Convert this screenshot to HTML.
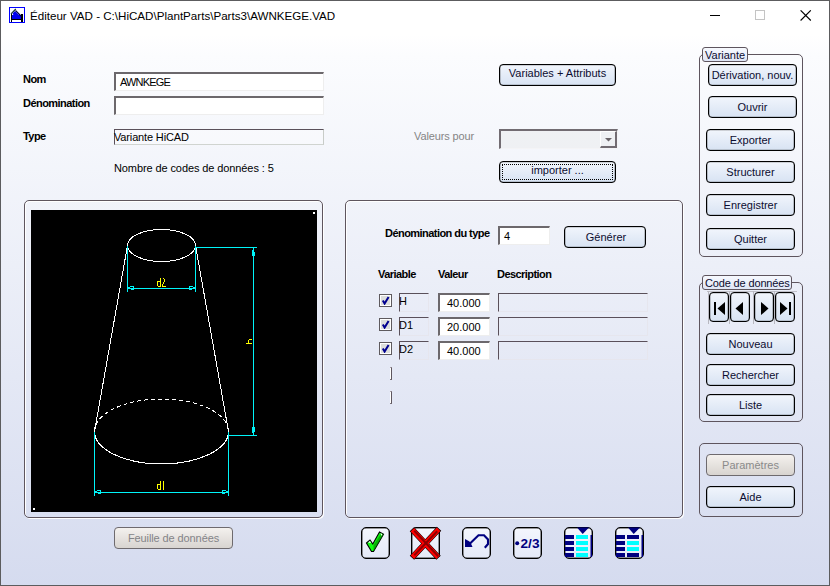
<!DOCTYPE html>
<html><head><meta charset="utf-8">
<style>
*{margin:0;padding:0;box-sizing:border-box}
html,body{width:830px;height:586px;overflow:hidden;background:#fff}
body{position:relative;font-family:"Liberation Sans",sans-serif;font-size:11px;color:#000}
.a{position:absolute}
.t{position:absolute;white-space:nowrap;line-height:13px}
#win{position:absolute;left:0;top:0;width:830px;height:586px;
background:linear-gradient(to bottom,#fff 0px,#fff 34px,#fbfcfe 56px,#d5dbef 586px)}
#bd{position:absolute;left:0;top:0;width:830px;height:586px;border:1px solid #5c5c5e}
.edit{position:absolute;background:#fff;border-top:2px solid #6c686c;border-left:2px solid #6c686c;border-right:1px solid #eeeeee;border-bottom:1px solid #eeeeee}
.edit2{position:absolute;border-top:2px solid #6c686c;border-left:2px solid #6c686c;border-right:1px solid #e6e6ee;border-bottom:1px solid #e6e6ee}
.btn{position:absolute;border:1px solid #000;box-shadow:inset 0 0 0 0.35px rgba(0,0,0,0.6);border-radius:4px;background:linear-gradient(to bottom,#f1f5fc,#d8e3f3);text-align:center;line-height:21px;color:#0c0c30}
.btnd{position:absolute;border:1px solid #6e6a6e;border-radius:4px;background:linear-gradient(to bottom,#f4f1ee,#d8d4d0);text-align:center;line-height:21px;color:#8a8a8a}
.grp{position:absolute;border:1px solid #5e555e;border-radius:5px}
.lbl{position:absolute;white-space:nowrap;border:1px solid #5e555e;border-radius:3px;background:linear-gradient(#f7f9fe,#dfe6f6);line-height:14px;padding-left:2px;color:#0c0c30}
.b{font-weight:bold;letter-spacing:-0.55px}
.tb{position:absolute;width:29px;height:32px;border:1px solid #000;box-shadow:inset 0 0 0 0.5px #333;border-radius:5px;background:linear-gradient(#f4f6fd,#e4e9f8)}
</style></head><body>
<div id="win">
<svg class="a" style="left:0;top:0" width="30" height="30" viewBox="0 0 30 30">
 <rect x="9.5" y="7.5" width="15" height="15" fill="#fff" stroke="#0000ff" stroke-width="1" shape-rendering="crispEdges"/>
 <g shape-rendering="crispEdges">
 <rect x="11" y="14" width="1" height="8" fill="#000"/><rect x="21" y="14" width="2" height="8" fill="#000"/>
 <rect x="11" y="19" width="12" height="1" fill="#000"/>
 <rect x="12" y="15" width="9" height="4" fill="#0000f0"/>
 </g>
 <path d="M12.5 13.5 L15 11 L21 17 L21 19 L16 19 Z" fill="#0000f0"/>
 <path d="M15.5 10.5 L21.5 16.5" stroke="#000050" stroke-width="1.1"/>
 <path d="M11 13.8 L15.8 9" stroke="#103038" stroke-width="1.2"/>
</svg>
<div class="t" style="left:30px;top:8px;font-size:11.6px;line-height:15px">Éditeur VAD - C:\HiCAD\PlantParts\Parts3\AWNKEGE.VAD</div>
<div class="a" style="left:710px;top:15px;width:10px;height:1px;background:#000"></div>
<div class="a" style="left:755px;top:10px;width:10px;height:10px;border:1px solid #c4c4c4"></div>
<svg class="a" style="left:800px;top:10px" width="12" height="11" viewBox="0 0 12 11"><path d="M0.6 0.3 L10.8 10.5 M10.8 0.3 L0.6 10.5" stroke="#000" stroke-width="1.1"/></svg>
<div class="t b" style="left:23px;top:73px;">Nom</div>
<div class="t b" style="left:23px;top:97px;">Dénomination</div>
<div class="t b" style="left:23px;top:130px;">Type</div>
<div class="edit" style="left:114px;top:72px;width:210px;height:19px"></div>
<div class="t " style="left:120px;top:76px;letter-spacing:-0.85px">AWNKEGE</div>
<div class="edit" style="left:114px;top:96px;width:210px;height:19px"></div>
<div class="a" style="left:114px;top:129px;width:210px;height:16px;border:1px solid #5a505a;border-right-color:#c8ccc8;border-bottom-color:#d0d4d0;background:rgba(255,255,255,0.3)"></div>
<div class="t " style="left:114px;top:131px;letter-spacing:-0.15px">Variante HiCAD</div>
<div class="t " style="left:114px;top:162px;letter-spacing:-0.1px">Nombre de codes de données : 5</div>
<div class="btn" style="left:499px;top:64px;width:117px;height:22px;line-height:17px">Variables + Attributs</div>
<div class="t " style="left:414px;top:130px;color:#858585;letter-spacing:-0.12px">Valeurs pour</div>
<div class="a" style="left:499px;top:129px;width:119px;height:20px;border-top:2px solid #726c72;border-left:2px solid #726c72;border-right:1px solid #f4f4f6;border-bottom:1px solid #f4f4f6;background:rgba(230,230,230,0.35)"></div>
<div class="a" style="left:600px;top:131px;width:17px;height:17px;border-left:1px solid #fff;border-top:1px solid #fff;border-right:2px solid #726c72;border-bottom:2px solid #726c72"></div>
<svg class="a" style="left:605px;top:138px" width="8" height="5"><path d="M0 0 L7 0 L3.5 3.5Z" fill="#6a6468"/></svg>
<div class="btn" style="left:499px;top:161px;width:117px;height:22px;line-height:17px"><div class="a" style="left:2px;top:2px;right:2px;bottom:2px;border:1px dotted #000"></div>importer ...</div>
<div class="grp" style="left:24px;top:200px;width:299px;height:318px;box-shadow:1px 1px 0 #fff,inset 1px 1px 0 #fff"></div>
<div class="a" style="left:31px;top:210px;width:286px;height:302px;background:#000">
 <svg width="286" height="302" viewBox="31 210 286 302" style="position:absolute;left:0;top:0">
  <g fill="none" stroke="#ffffff" stroke-width="1" shape-rendering="crispEdges">
   <ellipse cx="161.5" cy="245.5" rx="34" ry="16"/>
   <path d="M127.5 245.5 L94.5 431.5 M195.5 245.5 L228.5 431.5"/>
   <path d="M94.5 431.5 A67 32.5 0 0 0 228.5 431.5"/>
   <path d="M94.5 431.5 A67 32.5 0 0 1 228.5 431.5" stroke-dasharray="4 3"/>
  </g>
  <g fill="none" stroke="#00f4f8" stroke-width="1" shape-rendering="crispEdges">
   <path d="M127.5 246 L127.5 292 M195.5 246 L195.5 292 M127.5 288.5 L195.5 288.5"/>
   <path d="M195.5 247.5 L257 247.5 M228.5 435.5 L257 435.5 M253.5 247.5 L253.5 435.5"/>
   <path d="M94.5 432 L94.5 496 M228.5 432 L228.5 496 M94.5 492.5 L228.5 492.5"/>
   <path d="M128 288.5 L130 287 L133.5 286.5 L133.5 289.5 L131 289.5"/>
   <path d="M195 288.5 L193 287 L189.5 286.5 L189.5 289.5 L192 289.5"/>
   <path d="M95 492.5 L97 491 L100.5 490.5 L100.5 493.5 L98 493.5"/>
   <path d="M228 492.5 L226 491 L222.5 490.5 L222.5 493.5 L225 493.5"/>
   <path d="M253.5 248 L252.5 251.5 L252.5 255.5 L254.5 255.5 L254.5 251.5"/>
   <path d="M253.5 435 L252.5 431.5 L252.5 427.5 L254.5 427.5 L254.5 431.5"/>
  </g>
  <rect x="313" y="212" width="2" height="2" fill="#fff"/>
  <rect x="33" y="508" width="2" height="2" fill="#fff"/>
  <g fill="none" stroke="#ffff00" stroke-width="1" shape-rendering="crispEdges">
   <path d="M160.5 278 L160.5 286.5 L158.5 286.5 L157.5 285.5 L157.5 282 L158.5 281.5 L160.5 281.5"/>
   <path d="M162.5 279.5 L163.5 278.5 L164.5 279.5 L164.5 281.5 L162.5 285 L162.5 286.5 L165.5 286.5"/>
   <path d="M160.5 481 L160.5 489.5 L158.5 489.5 L157.5 488.5 L157.5 485 L158.5 484.5 L160.5 484.5"/>
   <path d="M162.5 482.5 L163.5 481.5 L163.5 489.5"/>
   <path d="M246 343.5 L251.5 343.5 M248.5 343.5 L248.5 340.5 L249.5 339.5 L251.5 339.5"/>
  </g>
 </svg>
</div>
<div class="btnd" style="left:114px;top:527px;width:119px;height:22px;letter-spacing:-0.1px;color:#848488">Feuille de données</div>
<div class="grp" style="left:345px;top:200px;width:338px;height:318px;box-shadow:1px 1px 0 #fff,inset 1px 1px 0 #fff"></div>
<div class="t b" style="left:385px;top:227px;">Dénomination du type</div>
<div class="edit" style="left:498px;top:226px;width:52px;height:19px"></div>
<div class="t " style="left:504px;top:230px;">4</div>
<div class="btn" style="left:564px;top:226px;width:82px;height:22px;padding-left:2px">Générer</div>
<div class="t b" style="left:378px;top:268px;">Variable</div>
<div class="t b" style="left:438px;top:268px;">Valeur</div>
<div class="t b" style="left:497px;top:268px;">Description</div>
<div class="a" style="left:379px;top:294px;width:13px;height:13px;border:1px solid #5e5a5e;background:#dcdedc;box-shadow:inset 0 0 0 1px #fff"></div>
<svg class="a" style="left:381px;top:296px" width="9" height="9"><path d="M1.8 4.6 L3.6 7.6 L7.6 1" fill="none" stroke="#000090" stroke-width="2"/></svg>
<div class="edit2" style="left:399px;top:293px;width:30px;height:19px;border-top-width:1px;border-left-width:1px;border-top-color:#5a505a;border-left-color:#5a505a"></div>
<div class="t " style="left:399px;top:295px;">H</div>
<div class="edit" style="left:438px;top:293px;width:52px;height:19px"></div>
<div class="t " style="left:447px;top:297px;">40.000</div>
<div class="edit2" style="left:498px;top:293px;width:150px;height:19px;border-top-width:1px;border-left-width:1px;border-top-color:#5a505a;border-left-color:#5a505a"></div>
<div class="a" style="left:379px;top:318px;width:13px;height:13px;border:1px solid #5e5a5e;background:#dcdedc;box-shadow:inset 0 0 0 1px #fff"></div>
<svg class="a" style="left:381px;top:320px" width="9" height="9"><path d="M1.8 4.6 L3.6 7.6 L7.6 1" fill="none" stroke="#000090" stroke-width="2"/></svg>
<div class="edit2" style="left:399px;top:317px;width:30px;height:19px;border-top-width:1px;border-left-width:1px;border-top-color:#5a505a;border-left-color:#5a505a"></div>
<div class="t " style="left:399px;top:319px;">D1</div>
<div class="edit" style="left:438px;top:317px;width:52px;height:19px"></div>
<div class="t " style="left:447px;top:321px;">20.000</div>
<div class="edit2" style="left:498px;top:317px;width:150px;height:19px;border-top-width:1px;border-left-width:1px;border-top-color:#5a505a;border-left-color:#5a505a"></div>
<div class="a" style="left:379px;top:342px;width:13px;height:13px;border:1px solid #5e5a5e;background:#dcdedc;box-shadow:inset 0 0 0 1px #fff"></div>
<svg class="a" style="left:381px;top:344px" width="9" height="9"><path d="M1.8 4.6 L3.6 7.6 L7.6 1" fill="none" stroke="#000090" stroke-width="2"/></svg>
<div class="edit2" style="left:399px;top:341px;width:30px;height:19px;border-top-width:1px;border-left-width:1px;border-top-color:#5a505a;border-left-color:#5a505a"></div>
<div class="t " style="left:399px;top:343px;">D2</div>
<div class="edit" style="left:438px;top:341px;width:52px;height:19px"></div>
<div class="t " style="left:447px;top:345px;">40.000</div>
<div class="edit2" style="left:498px;top:341px;width:150px;height:19px;border-top-width:1px;border-left-width:1px;border-top-color:#5a505a;border-left-color:#5a505a"></div>
<div class="a" style="left:390px;top:367px;width:2px;height:13px;border-right:1px solid #5e565e;border-top:1px solid #a8a0a8;border-bottom:1px solid #7a727a;box-shadow:inset -1px 0 0 #fff"></div>
<div class="a" style="left:390px;top:391px;width:2px;height:13px;border-right:1px solid #5e565e;border-top:1px solid #a8a0a8;border-bottom:1px solid #7a727a;box-shadow:inset -1px 0 0 #fff"></div>
<div class="grp" style="left:699px;top:54px;width:104px;height:203px"></div>
<div class="lbl" style="left:702px;top:47px;width:46px;height:15px">Variante</div>
<div class="btn" style="left:708px;top:64px;width:89px;height:22px">Dérivation, nouv.</div>
<div class="btn" style="left:708px;top:96px;width:89px;height:22px">Ouvrir</div>
<div class="btn" style="left:706px;top:129px;width:89px;height:22px">Exporter</div>
<div class="btn" style="left:706px;top:161px;width:89px;height:22px">Structurer</div>
<div class="btn" style="left:706px;top:194px;width:89px;height:22px">Enregistrer</div>
<div class="btn" style="left:706px;top:228px;width:89px;height:22px">Quitter</div>
<div class="grp" style="left:699px;top:282px;width:104px;height:140px"></div>
<div class="lbl" style="left:702px;top:275px;width:90px;height:15px;letter-spacing:-0.15px">Code de données</div>
<div class="a" style="left:707px;top:291px;width:90px;height:1px;background:#c0c0c8"></div>
<div class="a" style="left:708px;top:291px;width:1px;height:33px;background:#b8b8c0"></div>
<div class="a" style="left:729px;top:291px;width:1px;height:33px;background:#b8b8c0"></div>
<div class="a" style="left:753px;top:291px;width:1px;height:33px;background:#b8b8c0"></div>
<div class="a" style="left:774px;top:291px;width:1px;height:33px;background:#b8b8c0"></div>
<div class="btn" style="left:709px;top:292px;width:20px;height:30px"></div>
<div class="btn" style="left:730px;top:292px;width:20px;height:30px"></div>
<div class="btn" style="left:754px;top:292px;width:20px;height:30px"></div>
<div class="btn" style="left:775px;top:292px;width:20px;height:30px"></div>
<svg class="a" style="left:709px;top:292px" width="90" height="30">
 <rect x="5" y="10" width="2" height="13" fill="#000"/><path d="M16 10 L8.5 16.5 L16 23Z" fill="#000"/>
 <path d="M34 10 L26.5 16.5 L34 23Z" fill="#000"/>
 <path d="M52 10 L59.5 16.5 L52 23Z" fill="#000"/>
 <path d="M71 10 L78.5 16.5 L71 23Z" fill="#000"/><rect x="80" y="10" width="2" height="13" fill="#000"/>
</svg>
<div class="btn" style="left:706px;top:333px;width:89px;height:22px">Nouveau</div>
<div class="btn" style="left:706px;top:364px;width:89px;height:22px">Rechercher</div>
<div class="btn" style="left:706px;top:394px;width:89px;height:22px">Liste</div>
<div class="grp" style="left:699px;top:443px;width:104px;height:74px"></div>
<div class="btnd" style="left:706px;top:454px;width:89px;height:22px">Paramètres</div>
<div class="btn" style="left:706px;top:486px;width:89px;height:22px">Aide</div>
<div class="tb" style="left:361px;top:527px"></div>
<div class="tb" style="left:411px;top:527px"></div>
<div class="tb" style="left:462px;top:527px"></div>
<div class="tb" style="left:513px;top:527px"></div>
<div class="tb" style="left:564px;top:527px"></div>
<div class="tb" style="left:615px;top:527px"></div>
<svg class="a" style="left:0;top:520px" width="830" height="45" viewBox="0 520 830 45">
 <path d="M366.5 543 L370 540 L372.8 544 L379.5 532 L383.5 534.2 L373.5 551.5 L371.5 551.5Z" fill="#10ff10" stroke="#000" stroke-width="1.1"/>
 <path d="M373.5 545 L381.5 533 L383.5 534.2 L373.5 551.5Z" fill="#008000" opacity="0.6"/>
 <path d="M368 542.5 L370 541 L371 543Z" fill="#fff"/><path d="M380.5 533 L382.3 534.2 L381.3 536Z" fill="#fff"/>
 <g stroke-linecap="square">
 <path d="M414 531.5 L436.5 555.5" stroke="#000" stroke-width="6"/>
 <path d="M437 531 L414 555.5" stroke="#000" stroke-width="6"/>
 <path d="M414 531.5 L436.5 555.5" stroke="#ff0000" stroke-width="4.8"/>
 <path d="M437 531 L414 555.5" stroke="#ff0000" stroke-width="4.8"/>
 <path d="M415 531.5 L437.5 555.5" stroke="#900000" stroke-width="2"/>
 <path d="M436.5 532 L415 554.5" stroke="#900000" stroke-width="2"/>
 </g>
 <path d="M465 539 L465 547 L472.5 547 L471 543.5 L469.5 541.5Z" fill="#000080"/>
 <path d="M470 543.5 L478.5 535.2 L484 535.2 L488 539.5 L488 544 L484.8 547.8" fill="none" stroke="#000080" stroke-width="2.1"/>
 <circle cx="517.2" cy="543.3" r="2" fill="#000080"/>
 <text x="520.5" y="547.8" font-family="Liberation Sans" font-weight="bold" font-size="13" fill="#000080" textLength="19" lengthAdjust="spacingAndGlyphs">2/3</text>
 <g fill="#000080">
  <path d="M577 527.5 L589 527.5 L582.7 534Z"/>
  <rect x="565" y="535" width="9" height="4"/><rect x="565" y="541" width="9" height="4"/><rect x="565" y="547" width="9" height="4"/><rect x="565" y="553" width="9" height="4"/>
  <rect x="590.5" y="535" width="1.5" height="22"/>
  <path d="M628 527.5 L640 527.5 L633.7 534Z"/>
  <rect x="616" y="535" width="9" height="4"/><rect x="616" y="541" width="9" height="4"/><rect x="616" y="547" width="9" height="4"/><rect x="616" y="553" width="9" height="4"/>
  <rect x="641.5" y="535" width="1.5" height="22"/>
  <rect x="627" y="535" width="12" height="4"/><rect x="627" y="553" width="12" height="4"/>
 </g>
 <g fill="#00ffff">
  <rect x="576" y="535" width="12" height="4"/><rect x="576" y="541" width="12" height="4"/><rect x="576" y="547" width="12" height="4"/><rect x="576" y="553" width="12" height="4"/>
  <rect x="627" y="541" width="12" height="4"/><rect x="627" y="547" width="12" height="4"/>
 </g>
</svg>
<div id="bd"></div>
</div>
</body></html>
